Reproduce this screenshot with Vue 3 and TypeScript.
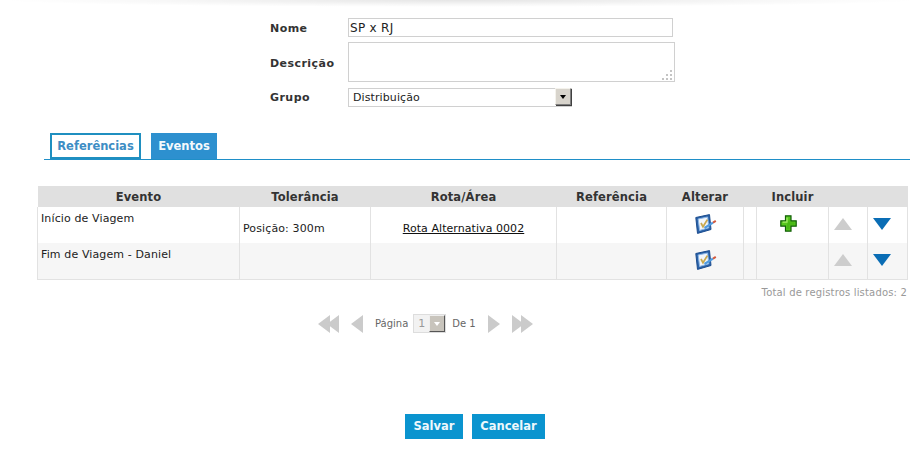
<script setup lang="ts">
interface Row {
  evento: string;
  tolerancia: string;
  rota: string;
  incluir: boolean;
}
const rows: Row[] = [
  { evento: "Início de Viagem", tolerancia: "Posição: 300m", rota: "Rota Alternativa 0002", incluir: true },
  { evento: "Fim de Viagem - Daniel", tolerancia: "", rota: "", incluir: false },
];
</script>

<template>
  <div class="page">
    <div class="top-shadow"></div>
    <form class="form" @submit.prevent>
      <label class="lbl lbl-nome">Nome</label>
      <input class="field nome" value="SP x RJ" />
      <label class="lbl lbl-desc">Descrição</label>
      <div class="desc-wrap">
        <textarea class="field desc"></textarea>
        <svg class="grip" width="11" height="11" viewBox="0 0 11 11" fill="#c4c4c4">
          <rect x="8" y="0" width="2" height="2" />
          <rect x="4" y="4" width="2" height="2" />
          <rect x="8" y="4" width="2" height="2" />
          <rect x="0" y="8" width="2" height="2" />
          <rect x="4" y="8" width="2" height="2" />
          <rect x="8" y="8" width="2" height="2" />
        </svg>
      </div>
      <label class="lbl lbl-grupo">Grupo</label>
      <div class="select">
        <span class="select-text">Distribuição</span>
        <span class="select-btn"><i class="caret"></i></span>
      </div>
    </form>

    <div class="tabs">
      <span class="tab tab-off">Referências</span>
      <span class="tab tab-on">Eventos</span>
    </div>

    <table class="grid">
      <colgroup>
        <col style="width: 202px" />
        <col style="width: 131px" />
        <col style="width: 186px" />
        <col style="width: 110px" />
        <col style="width: 77px" />
        <col style="width: 13px" />
        <col style="width: 72px" />
        <col style="width: 39px" />
        <col style="width: 40px" />
      </colgroup>
      <thead>
        <tr>
          <th>Evento</th>
          <th>Tolerância</th>
          <th>Rota/Área</th>
          <th>Referência</th>
          <th>Alterar</th>
          <th></th>
          <th>Incluir</th>
          <th></th>
          <th></th>
        </tr>
      </thead>
      <tbody>
        <tr v-for="r in rows" :key="r.evento">
          <td class="c-evento">{{ r.evento }}</td>
          <td class="c-tol">{{ r.tolerancia }}</td>
          <td class="c-rota"><a v-if="r.rota" href="#" @click.prevent>{{ r.rota }}</a></td>
          <td></td>
          <td class="c-icon">
            <svg class="edit" width="22" height="20" viewBox="0 0 22 20">
              <path d="M0.8 3.5 L14.5 0.6 L16 15.5 L2.5 19.4 Z" fill="#2a62a8" stroke="#1d4d8f" stroke-width="1" />
              <path d="M3.2 5 L12.6 3 L13.8 13.8 L4.6 16.4 Z" fill="#f2f6fb" stroke="#8fb8e6" stroke-width="1" />
              <path d="M6 9 L8 12.8 L12.4 5.6" fill="none" stroke="#c9a94f" stroke-width="1.8" />
              <path d="M9.5 14 L18 8.6" stroke="#4f9be0" stroke-width="2.2" />
              <path d="M18 8.6 L20.8 6.9" stroke="#d2583c" stroke-width="2" />
            </svg>
          </td>
          <td></td>
          <td class="c-icon">
            <svg v-if="r.incluir" class="plus" width="17" height="17" viewBox="0 0 17 17">
              <path d="M5.5 0.8 H11 V5.8 H16.2 V11.2 H11 V16.2 H5.5 V11.2 H0.8 V5.8 H5.5 Z" fill="#57c81e" stroke="#125f08" stroke-width="1.2" />
              <path d="M7 2.6 V7.2 H2.6" fill="none" stroke="#a6ea6a" stroke-width="1.2" />
              <path d="M9.6 2.6 V7.2 H14.6 V9.8 H9.6 V14.6 H7 V9.8" fill="#3aa40e" fill-opacity="0.45" />
            </svg>
          </td>
          <td class="c-icon"><i class="arrow-up"></i></td>
          <td class="c-icon"><i class="arrow-down"></i></td>
        </tr>
      </tbody>
    </table>
    <div class="total">Total de registros listados: 2</div>

    <div class="pager">
      <span class="p-group">
        <i class="tri-l"></i><i class="tri-l tight"></i>
      </span>
      <i class="tri-l single"></i>
      <span class="p-text">Página</span>
      <span class="p-select">
        <span class="p-num">1</span>
        <span class="p-btn"><i class="caret light"></i></span>
      </span>
      <span class="p-text">De 1</span>
      <i class="tri-r single"></i>
      <span class="p-group">
        <i class="tri-r"></i><i class="tri-r tight"></i>
      </span>
    </div>

    <div class="actions">
      <button class="btn" type="button">Salvar</button>
      <button class="btn" type="button">Cancelar</button>
    </div>
  </div>
</template>

<style>
html, body { margin: 0; background: #fff; }
</style>

<style scoped>
.page {
  position: relative;
  width: 921px;
  height: 461px;
  overflow: hidden;
  font-family: Verdana, "DejaVu Sans", sans-serif;
  font-size: 11px;
  letter-spacing: 0.12px;
  color: #222;
  background: #fff;
}
.top-shadow {
  position: absolute;
  left: 0;
  right: 0;
  top: 0;
  height: 7px;
  background: radial-gradient(ellipse 50% 100% at 50% 0, rgba(0, 0, 0, 0.1), rgba(0, 0, 0, 0.03) 65%, rgba(0, 0, 0, 0) 100%);
}
.form {
  display: grid;
  grid-template-columns: 78px auto;
  justify-content: start;
  align-items: center;
  row-gap: 5px;
  padding: 18px 0 0 270px;
}
.lbl { font-weight: bold; color: #333; letter-spacing: 0.45px; }
.lbl-nome, .lbl-desc { position: relative; top: 1px; }
.field {
  display: block;
  box-sizing: border-box;
  margin: 0;
  border: 1px solid #d0d0d0;
  border-radius: 0;
  outline: none;
  font: inherit;
  color: #222;
  background: #fff;
}
.nome { width: 325px; height: 19px; padding: 0 1px; font-size: 12px; letter-spacing: 0.3px; }
.desc-wrap { position: relative; width: 327px; height: 40px; }
.desc { width: 327px; height: 40px; padding: 1px; resize: none; }
.grip { position: absolute; right: 2px; bottom: 1px; }
.select {
  box-sizing: border-box;
  width: 224px;
  height: 19px;
  margin-top: 1px;
  border: 1px solid #d0d0d0;
  display: flex;
  align-items: center;
  justify-content: space-between;
}
.select-text { padding-left: 4px; letter-spacing: 0.1px; }
.select-btn {
  box-sizing: border-box;
  width: 16px;
  height: 17px;
  margin-top: -2px;
  display: flex;
  align-items: center;
  justify-content: center;
  background: #d8d4cc;
  border: 1px solid;
  border-color: #f4f2ec #808080 #808080 #f4f2ec;
  box-shadow: 1px 1px 0 #404040;
}
.caret {
  width: 0;
  height: 0;
  border-left: 3.5px solid transparent;
  border-right: 3.5px solid transparent;
  border-top: 4px solid #000;
}
.caret.light { border-top-color: #fff; }
.tabs {
  display: flex;
  gap: 10px;
  margin: 26px 11px 0 44px;
  padding-left: 6px;
  border-bottom: 1px solid #1f8fc8;
  height: 26px;
}
.tab {
  box-sizing: border-box;
  height: 26px;
  display: flex;
  align-items: center;
  font-weight: bold;
  font-size: 11.5px;
  letter-spacing: 0;
}
.tab-off {
  width: 91px;
  justify-content: center;
  border: 2px solid #1f8fc0;
  color: #3d8dc4;
  background: #fff;
}
.tab-on {
  width: 66px;
  justify-content: center;
  background: #2d90cf;
  color: #f4f9fc;
}
.grid {
  table-layout: fixed;
  width: 870px;
  margin: 26px 0 0 37px;
  border-collapse: collapse;
}
.grid th {
  height: 21px;
  padding: 0;
  background: #e0e0e0;
  color: #333;
  font-weight: bold;
  font-size: 11.5px;
  letter-spacing: 0.15px;
  text-align: center;
}
.grid td {
  height: 36px;
  padding: 0;
  border: 1px solid #e2e2e2;
  border-top: 0;
  box-sizing: border-box;
}
.grid tbody tr:nth-child(even) td { background: #f6f6f6; }
.grid tbody tr:first-child td { border-bottom: 0; }
.c-evento { vertical-align: top; padding: 5px 0 0 3px !important; }
.c-tol { padding: 7px 0 0 3px !important; }
.c-rota { text-align: center; padding-top: 7px !important; letter-spacing: 0.06px; }
.c-rota a { color: #111; text-decoration: underline; }
.c-icon { text-align: center; vertical-align: top; padding-top: 7px !important; }
.c-icon svg { display: inline-block; vertical-align: top; }
.edit { margin-left: 1px; }
.plus { margin: 1px 8px 0 0; }
.arrow-up, .arrow-down { display: inline-block; width: 0; height: 0; margin: 4px 10px 0 0; }
.arrow-up {
  border-left: 9.5px solid transparent;
  border-right: 9.5px solid transparent;
  border-bottom: 12px solid #cdcdcd;
}
.arrow-down {
  margin-right: 12px;
  border-left: 9.5px solid transparent;
  border-right: 9.5px solid transparent;
  border-top: 12px solid #0a6db5;
}
.total {
  width: 870px;
  margin: 7px 0 0 37px;
  text-align: right;
  font-size: 10px;
  letter-spacing: 0.17px;
  color: #999;
}
.pager {
  display: flex;
  align-items: center;
  margin: 16px 0 0 318px;
  height: 20px;
  color: #666;
  font-size: 10px;
}
.p-group { display: flex; }
.tri-l, .tri-r { display: block; width: 0; height: 0; border-top: 9.5px solid transparent; border-bottom: 9.5px solid transparent; }
.tri-l { border-right: 12px solid #cbcbcb; }
.tri-r { border-left: 12px solid #cbcbcb; }
.tight { margin-left: -3px; }
.single.tri-l { margin: 0 12px 0 12px; }
.single.tri-r { margin: 0 12px 0 12px; }
.p-text { color: #666; letter-spacing: 0; }
.p-select {
  box-sizing: border-box;
  display: flex;
  width: 33px;
  height: 19px;
  margin: 0 6px 0 5px;
  border: 1px solid #ddd;
  background: #f2f2f2;
}
.p-num { width: 15px; text-align: center; line-height: 17px; color: #999; font-size: 11px; }
.p-btn {
  box-sizing: border-box;
  width: 16px;
  height: 17px;
  display: flex;
  align-items: center;
  justify-content: center;
  background: #c8c4bc;
  border: 1px solid;
  border-color: #eeeeee #555 #555 #eeeeee;
}
.actions {
  display: flex;
  justify-content: flex-start;
  gap: 9px;
  margin: 80px 0 0 405px;
}
.btn {
  height: 25px;
  border: 0;
  padding: 0;
  background: #0a94cf;
  color: #eef8fc;
  font: inherit;
  font-weight: bold;
  font-size: 11.5px;
  letter-spacing: 0;
}
.btn:first-child { width: 58px; }
.btn:last-child { width: 73px; }
</style>
